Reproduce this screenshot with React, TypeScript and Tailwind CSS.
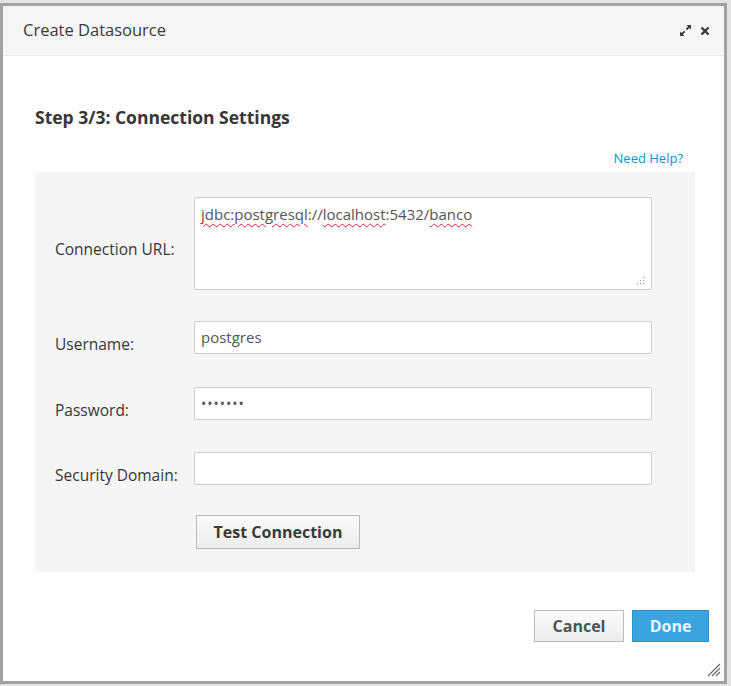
import React from "react";

const font = { fontFamily: '"Open Sans", "Liberation Sans", sans-serif' };

const Row = ({ label, children, labelOffset = "pt-3" }: { label: string; children: React.ReactNode; labelOffset?: string }) => (
  <div className="flex items-center">
    <label className={`w-[159px] shrink-0 pl-5 text-[15.5px] leading-5 text-[#363636] ${labelOffset}`}>{label}</label>
    {children}
  </div>
);

const Squiggle = ({ children }: { children: React.ReactNode }) => (
  <span className="underline decoration-wavy decoration-[#d0243c] decoration-1 underline-offset-[3px]">{children}</span>
);

export default function App() {
  return (
    <div className="w-[731px] h-[686px] bg-[#e4e4e4] pt-[3px] pr-[4px] pb-[2px]" style={font}>
      <div className="relative flex h-full flex-col border-[3px] border-[#a2a2a2] bg-white">
        {/* Header */}
        <div className="flex h-[50px] items-center justify-between border-b border-[#ececec] bg-[#f6f6f6] pl-5 pr-[14px]">
          <h1 className="text-[16.5px] text-[#3a3a3a]">Create Datasource</h1>
          <div className="flex items-center gap-[9px] text-[#3a3a3a]">
            <svg width="11" height="11" viewBox="0 0 11 11" fill="#3a3a3a">
              <path d="M6.5 0H11V4.5L9.4 2.9 7 5.3 5.7 4 8.1 1.6Z" />
              <path d="M4.5 11H0V6.5L1.6 8.1 4 5.7 5.3 7 2.9 9.4Z" />
            </svg>
            <svg width="10" height="10" viewBox="0 0 10 10">
              <path d="M1.5 1.5L8.5 8.5M8.5 1.5L1.5 8.5" stroke="#3a3a3a" strokeWidth="2.4" />
            </svg>
          </div>
        </div>

        {/* Body */}
        <div className="pl-8 pr-[29px] pt-[49px]">
          <h2 className="text-[17.5px] font-bold leading-6 text-[#363636]">Step 3/3: Connection Settings</h2>
          <div className="mt-[21px] mb-[5px] flex justify-end pr-3">
            <a className="text-[13px] leading-[17px] text-[#0099d3]">Need Help?</a>
          </div>

          <div className="flex flex-col bg-[#f5f5f5] pt-[25px] pb-[23px] pr-[43px]">
            <Row label="Connection URL:" labelOffset="pt-[10px]">
              <div className="relative h-[93px] flex-1 rounded-[2px] border border-[#cfcfcf] bg-white px-[6px] pt-[5px] text-[15px] text-[#555]">
                <Squiggle>jdbc:postgresql</Squiggle>://<Squiggle>localhost</Squiggle>:5432/<Squiggle>banco</Squiggle>
                <svg className="absolute bottom-[4px] right-[6px]" width="9" height="9" viewBox="0 0 9 9" fill="#9a9a9a">
                  <rect x="7" y="1" width="1.2" height="1.2" />
                  <rect x="4" y="4" width="1.2" height="1.2" />
                  <rect x="7" y="4" width="1.2" height="1.2" />
                  <rect x="1" y="7" width="1.2" height="1.2" />
                  <rect x="4" y="7" width="1.2" height="1.2" />
                  <rect x="7" y="7" width="1.2" height="1.2" />
                </svg>
              </div>
            </Row>

            <div className="mt-[31px]">
              <Row label="Username:">
                <div className="flex h-[33px] flex-1 items-center rounded-[2px] border border-[#cfcfcf] bg-white px-[6px] text-[15px] text-[#555]">
                  postgres
                </div>
              </Row>
            </div>

            <div className="mt-[33px]">
              <Row label="Password:">
                <div className="flex h-[33px] flex-1 items-center rounded-[2px] border border-[#cfcfcf] bg-white px-[6px] text-[14px] tracking-[1px] text-[#555]">
                  •••••••
                </div>
              </Row>
            </div>

            <div className="mt-[32px]">
              <Row label="Security Domain:">
                <div className="h-[33px] flex-1 rounded-[2px] border border-[#cfcfcf] bg-white" />
              </Row>
            </div>

            <div className="mt-[30px] pl-[161px]">
              <button className="h-[34px] w-[164px] border border-[#b9b9b9] bg-gradient-to-b from-[#fbfbfb] to-[#ececec] text-[16px] font-bold text-[#3a3a3a]">
                Test Connection
              </button>
            </div>
          </div>
        </div>

        {/* Footer */}
        <div className="mt-[38px] flex justify-end gap-2 pr-[15px]">
          <button className="h-[32px] w-[90px] border border-[#bcbcbc] bg-gradient-to-b from-[#fbfbfb] to-[#ececec] text-[16px] font-bold text-[#4d5258]">
            Cancel
          </button>
          <button className="h-[32px] w-[77px] border border-[#2c8fd0] bg-[#3ba4e0] text-[16px] font-bold text-[#eaf6ff]">
            Done
          </button>
        </div>

        <svg className="absolute bottom-[4px] right-[3px]" width="14" height="14" viewBox="0 0 14 14" stroke="#6a6a6a" strokeWidth="1.2">
          <path d="M1 13L13 1M5 13L13 5M9 13L13 9" />
        </svg>
      </div>
    </div>
  );
}
